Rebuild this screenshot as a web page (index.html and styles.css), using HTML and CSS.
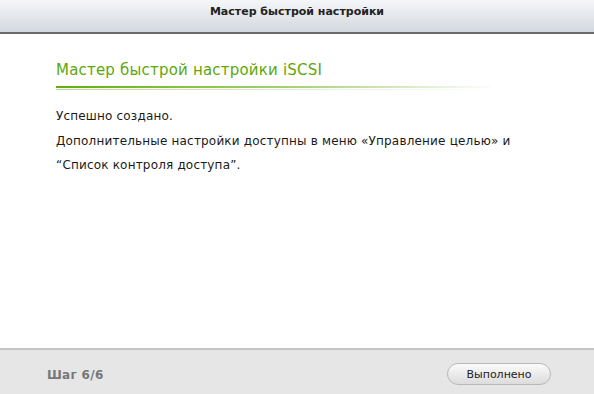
FILE: index.html
```html
<!DOCTYPE html>
<html lang="ru">
<head>
   <meta charset="UTF-8">
   <title>Мастер быстрой настройки</title>
   <link rel="stylesheet" href="styles.css">
</head>
<body>
   <div class="wizard">
       <div class="wizard-header">Мастер быстрой настройки</div>
       <div class="wizard-body">
           <h1 class="wizard-title">Мастер быстрой настройки iSCSI</h1>
           <p class="wizard-text">Успешно создано.</p>
           <p class="wizard-text">Дополнительные настройки доступны в меню «Управление целью» и</p>
           <p class="wizard-text">“Список контроля доступа”.</p>
       </div>
       <div class="wizard-footer">
           <span class="step">Шаг 6/6</span>
           <button class="btn">Выполнено</button>
       </div>
   </div>
</body>
</html>
```

FILE: styles.css
```css
body {
    margin: 0;
    font-family: "DejaVu Sans", Verdana, sans-serif;
    background: #fff;
}
.wizard {
    width: 594px;
    height: 394px;
    display: flex;
    flex-direction: column;
}
.wizard-header {
    height: 32px;
    line-height: 24px;
    text-align: center;
    font-size: 11px;
    font-weight: bold;
    color: #222;
    background: linear-gradient(#f5f6f8, #d3d8de);
    border-bottom: 2px solid #6a6a6a;
}
.wizard-body {
    flex: 1;
    padding: 27px 0 0 56px;
}
.wizard-title {
    margin: 0 0 14px;
    width: 440px;
    padding-bottom: 11px;
    font-size: 15px;
    line-height: 18px;
    font-weight: normal;
    letter-spacing: 0.2px;
    color: #5da70b;
    background:
        linear-gradient(90deg, #62ad10, #a9d27c 55%, rgba(255,255,255,0)) left bottom 2px / 100% 2px no-repeat,
        linear-gradient(90deg, #b6da8f, #e2f0d2 55%, rgba(255,255,255,0)) left bottom / 100% 1px no-repeat;
}
.wizard-text {
    margin: 0;
    font-size: 12px;
    line-height: 24.5px;
    letter-spacing: 0.18px;
    color: #1a1a1a;
}
.wizard-footer {
    height: 38px;
    border-top: 2px solid #c4c4c4;
    background: #e6e6e6;
    display: flex;
    align-items: center;
    justify-content: space-between;
    padding: 6px 43px 0 47px;
}
.step {
    font-size: 12px;
    font-weight: bold;
    letter-spacing: 0.3px;
    color: #777;
}
.btn {
    width: 104px;
    height: 22px;
    margin-top: -2px;
    border: 1px solid #b9b9b9;
    border-radius: 11px;
    background: linear-gradient(#fbfbfb, #dcdcdc);
    font-family: "DejaVu Sans", Verdana, sans-serif;
    font-size: 11px;
    color: #222;
}
```
